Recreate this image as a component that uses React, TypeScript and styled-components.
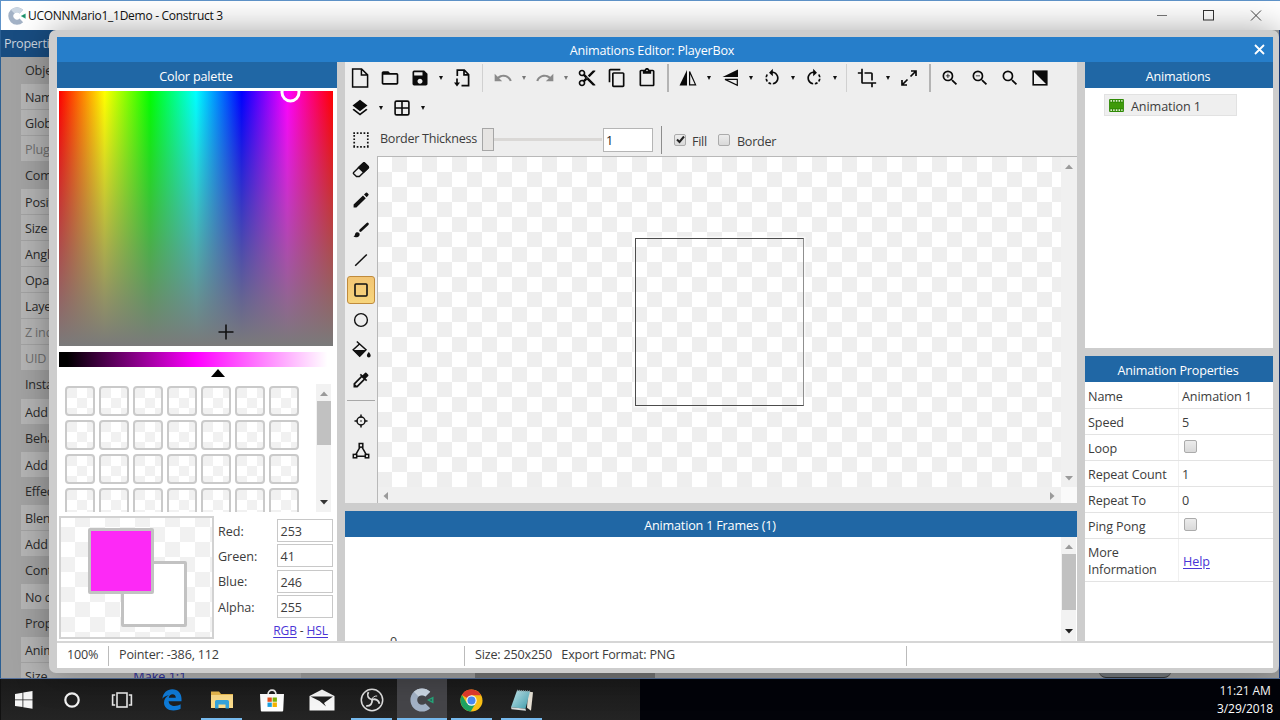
import React from "react";
import styled, { createGlobalStyle, css } from "styled-components";
import {
  MdContentCopy,
  MdContentCut,
  MdContentPaste,
  MdColorize,
  MdCrop,
  MdFolderOpen,
  MdLayers,
  MdRedo,
  MdRotateLeft,
  MdRotateRight,
  MdSave,
  MdSearch,
  MdUndo,
  MdZoomIn,
  MdZoomOut,
} from "react-icons/md";

const GlobalStyle = createGlobalStyle`
  * { box-sizing: border-box; }
  html, body { margin: 0; padding: 0; overflow: hidden; }
  body { font-family: "Open Sans", "Noto Sans", sans-serif; font-size: 12.6px; letter-spacing: -0.18px; color: #3c3c3c; }
  svg { display: block; flex: none; }
`;

const checker = (size: number, x: number, y: number, tone = "#eeeeee") => css`
  background-color: #fff;
  background-image: conic-gradient(${tone} 25%, #fff 0 50%, ${tone} 0 75%, #fff 0);
  background-size: ${size * 2}px ${size * 2}px;
  background-position: ${x}px ${y}px;
`;

const Screen = styled.div`
  position: relative;
  width: 1280px;
  height: 720px;
  display: flex;
  flex-direction: column;
  overflow: hidden;
  background: #999;
`;

/* ---------- window frame ---------- */

const TitleBar = styled.header`
  height: 30px;
  flex: none;
  display: flex;
  align-items: center;
  background: #fff;
  border-top: 1px solid #5f93c9;
  border-left: 1px solid #5f93c9;
  padding: 0 18px 0 7px;
  color: #111;
`;

const WindowTitle = styled.span`
  flex: 1;
  margin-left: 2px;
  font-size: 12px;
  letter-spacing: -0.28px;
`;

const WindowButtons = styled.div`
  display: flex;
  align-items: center;
  gap: 35px;
`;

const Workspace = styled.div`
  flex: 1;
  min-height: 0;
  display: flex;
  overflow: hidden;
  background: #a2a2a2;
  border-left: 1px solid #2b5f93;
  border-right: 1px solid #1a3f86;
`;

const Sidebar = styled.aside`
  width: 300px;
  display: flex;
  flex-direction: column;
  flex: none;
`;

const SidebarHeader = styled.div`
  height: 27px;
  flex: none;
  background: #184c80;
  color: #c9d4df;
  padding: 0 3px;
  line-height: 27px;
  letter-spacing: -0.3px;
`;

const SidebarRow = styled.div<{ $group?: boolean; $dim?: boolean }>`
  height: ${(p) => (p.$group ? 27.2 : 26)}px;
  flex: none;
  margin-left: 20px;
  padding-left: 4px;
  line-height: 27px;
  white-space: nowrap;
  display: flex;
  color: ${(p) => (p.$dim ? "#6f6f6f" : "#2a2a2a")};
  background: ${(p) => (p.$group ? "transparent" : "#b4b4b4")};
  border-bottom: ${(p) => (p.$group ? "none" : "1px solid #a2a2a2")};
`;

const SidebarValue = styled.span`
  margin-left: 86px;
  letter-spacing: 0;
  color: #2a2a9a;
`;

const SidebarScroll = styled.div`
  align-self: flex-end;
  width: 180px;
  height: 7px;
  margin-left: 174px;
  background: #777;
`;

const PillButton = styled.div`
  align-self: flex-end;
  width: 72px;
  height: 7px;
  margin-left: 444px;
  border-radius: 0 0 14px 14px;
  border-bottom: 1.5px solid #333;
  background: #777b80;
`;

/* ---------- dialog ---------- */

const Dialog = styled.section`
  position: absolute;
  left: 49px;
  top: 30px;
  width: 1230px;
  height: 643px;
  padding: 7px 6px 5px 8px;
  display: flex;
  flex-direction: column;
  background: #cdcdcd;
  border-radius: 7px;
  box-shadow: 0 0 34px rgba(0, 0, 0, 0.35);
`;

const DialogTitle = styled.div`
  height: 25px;
  flex: none;
  display: flex;
  align-items: center;
  background: #267eca;
  color: #fff;
  padding: 0 8px 0 22px;
  span {
    flex: 1;
    text-align: center;
    letter-spacing: -0.2px;
    margin-left: -29px;
    padding-top: 1px;
  }
`;

const DialogBody = styled.div`
  flex: 1;
  min-height: 0;
  display: grid;
  grid-template-columns: 280px 732px 188px;
  column-gap: 8px;
`;

const Column = styled.div<{ $gap?: number; $fill?: boolean }>`
  display: flex;
  flex-direction: column;
  gap: ${(p) => p.$gap ?? 0}px;
  ${(p) => p.$fill && "flex: 1;"}
  min-width: 0;
  min-height: 0;
`;

const PanelHeader = styled.div`
  height: 26px;
  flex: none;
  display: flex;
  align-items: center;
  justify-content: center;
  background: #2067a5;
  color: #fff;
  font-weight: 500;
  padding: 2px 2px 0 0;
`;

const PanelBody = styled.div<{ $height?: number; $pt?: number }>`
  ${(p) => (p.$height ? `height: ${p.$height}px; flex: none;` : "flex: 1;")}
  padding-top: ${(p) => p.$pt ?? 0}px;
  min-height: 0;
  background: #fff;
  overflow: hidden;
`;

/* ---------- colour palette ---------- */

const PaletteBody = styled(PanelBody)`
  display: flex;
  flex-direction: column;
  padding: 3px 4px 0 2px;
`;

const HueField = styled.div`
  position: relative;
  height: 255px;
  flex: none;
  overflow: hidden;
  background: linear-gradient(to bottom, rgba(124, 124, 124, 0) 0%, #7a7a7a 100%),
    linear-gradient(to right, #f00, #ff0, #0f0, #0ff, #00f, #f0f, #f00);
`;

const HueOverlay = styled.svg`
  position: absolute;
  inset: 0;
`;

const ShadeBar = styled.div`
  height: 15px;
  flex: none;
  margin-top: 6px;
  background: linear-gradient(to right, #000 3%, #f0f 50%, #fff 98%);
`;

const ShadeMarker = styled.div`
  width: 0;
  height: 0;
  flex: none;
  margin: 2px 0 0 151.5px;
  border: 7.5px solid transparent;
  border-top: 0;
  border-bottom: 8px solid #000;
`;

const SwatchArea = styled.div`
  margin-top: 7px;
  height: 128px;
  flex: none;
  display: flex;
  justify-content: space-between;
  overflow: hidden;
`;

const SwatchGrid = styled.div`
  display: grid;
  grid-template-columns: repeat(7, 30px);
  grid-auto-rows: 30px;
  gap: 4px;
  padding: 2px 0 0 6px;
`;

const Swatch = styled.div`
  border: 2px solid #cacaca;
  border-radius: 4px;
  ${checker(10, 0, 10, "#f1f1f1")}
`;

const ScrollTrack = styled.div<{ $mr?: number }>`
  width: 15px;
  margin-right: ${(p) => p.$mr ?? 0}px;
  display: flex;
  flex-direction: column;
  align-items: center;
  background: #f2f2f2;
  padding: 6px 0;
`;

const ScrollThumb = styled.div<{ $height: number; $mt?: number }>`
  width: 14px;
  height: ${(p) => p.$height}px;
  margin-top: ${(p) => p.$mt ?? 3}px;
  background: #c1c1c1;
`;

const Spacer = styled.div`
  flex: 1;
`;

const ColorEditor = styled.div`
  margin-top: 4px;
  display: flex;
`;

const PreviewBox = styled.div`
  position: relative;
  width: 155px;
  height: 123px;
  flex: none;
  border: 2px solid #d2d2d2;
  ${checker(15, -1, -6, "#f1f1f1")}
`;

const PreviewChip = styled.div<{ $x: number; $y: number; $color: string }>`
  position: absolute;
  left: ${(p) => p.$x}px;
  top: ${(p) => p.$y}px;
  width: 66px;
  height: 66px;
  border: 3px solid #c2c2c2;
  border-radius: 2px;
  background: ${(p) => p.$color};
`;

const ChannelList = styled.div`
  flex: 1;
  margin: 3px 0 0 4px;
  display: flex;
  flex-direction: column;
  gap: 2.4px;
`;

const ChannelRow = styled.label`
  display: flex;
  align-items: center;
  justify-content: space-between;
  height: 23px;
  padding-top: 1px;
  letter-spacing: -0.05px;
`;

const ChannelValue = styled.span`
  width: 56px;
  height: 23px;
  margin-top: -1px;
  border: 1.5px solid #c8c8c8;
  background: #fff;
  padding-left: 2.5px;
  line-height: 23px;
`;

const Link = styled.a`
  color: #4a35d6;
  text-decoration: underline;
  text-underline-offset: 2px;
`;

const ModeLinks = styled.div`
  margin: 0 5px 0 0;
  text-align: right;
  font-size: 12px;
  line-height: 20px;
  letter-spacing: -0.1px;
`;

/* ---------- editor ---------- */

const EditorPane = styled.div`
  height: 441px;
  flex: none;
  display: flex;
  flex-direction: column;
  background: #eee;
`;

const ToolbarRow = styled.div<{ $first?: boolean }>`
  height: 30px;
  margin-top: ${(p) => (p.$first ? 1 : 0)}px;
  flex: none;
  display: flex;
  align-items: center;
`;

const ToolCell = styled.div<{ $dim?: boolean }>`
  width: 30px;
  height: 30px;
  display: flex;
  align-items: center;
  justify-content: center;
  color: ${(p) => (p.$dim ? "#8a8a8a" : "#0a0a0a")};
`;

const DropArrow = styled.div<{ $dim?: boolean }>`
  width: 12px;
  display: flex;
  justify-content: center;
  &::before {
    content: "";
    margin-right: 1px;
    border: 2.5px solid transparent;
    border-bottom: 0;
    border-top: 4.5px solid ${(p) => (p.$dim ? "#777" : "#111")};
  }
`;

const Divider = styled.div<{ $strong?: boolean }>`
  width: 11px;
  height: 28px;
  display: flex;
  justify-content: center;
  &::before {
    content: "";
    width: ${(p) => (p.$strong ? 2 : 1)}px;
    background: ${(p) => (p.$strong ? "#b4b4b4" : "#d0d0d0")};
  }
`;

const EditorBody = styled.div`
  flex: 1;
  min-height: 0;
  display: flex;
  margin-top: 2px;
`;

const ToolStrip = styled.div`
  width: 32px;
  flex: none;
  display: flex;
  flex-direction: column;
  align-items: center;
  padding-right: 1px;
`;

const StripTool = styled.div<{ $active?: boolean }>`
  width: 28px;
  height: 28px;
  margin: 1px 0;
  flex: none;
  display: flex;
  align-items: center;
  justify-content: center;
  color: #111;
  border-radius: 3px;
  border: 1.5px solid ${(p) => (p.$active ? "#c08b3c" : "transparent")};
  background: ${(p) => (p.$active ? "linear-gradient(#f2c574, #f7d57c)" : "transparent")};
`;

const StripLine = styled.div`
  width: 28px;
  height: 1px;
  flex: none;
  margin: 5px 0;
  background: #a8a8a8;
`;

const CanvasColumn = styled.div`
  flex: 1;
  display: flex;
  flex-direction: column;
`;

const OptionsRow = styled.div`
  height: 31px;
  flex: none;
  display: flex;
  align-items: center;
  padding: 0 0 2px 3px;
`;

const OptionLabel = styled.span<{ $ml?: number; $drop?: number; $width?: number }>`
  margin-left: ${(p) => p.$ml ?? 0}px;
  padding-top: ${(p) => p.$drop ?? 0}px;
  padding-bottom: ${(p) => (p.$drop ? 0 : 2)}px;
  width: ${(p) => (p.$width ? `${p.$width}px` : "auto")};
  letter-spacing: -0.28px;
  white-space: nowrap;
`;

const Slider = styled.div`
  width: 120px;
  height: 22px;
  margin-right: 1px;
  display: flex;
  align-items: center;
  &::before {
    content: "";
    width: 10px;
    height: 21px;
    border: 1.5px solid #a6a6a6;
    background: #e6e4e2;
  }
  &::after {
    content: "";
    flex: 1;
    height: 3px;
    background: #dad8d6;
  }
`;

const NumberField = styled.div`
  width: 50px;
  height: 24px;
  border: 1.5px solid #b5b5b5;
  background: #fff;
  padding-left: 2px;
  line-height: 24px;
  color: #222;
`;

const OptionRule = styled.div`
  width: 1px;
  height: 28px;
  margin: 1px 12px 0 8px;
  background: #8d8d8d;
`;

const CheckBox = styled.span<{ $size?: number }>`
  width: ${(p) => p.$size ?? 12}px;
  height: ${(p) => p.$size ?? 12}px;
  flex: none;
  display: inline-flex;
  align-items: center;
  justify-content: center;
  border: 1px solid #ababab;
  border-radius: 2px;
  background: linear-gradient(#ececec, #d9d9d9);
`;

const Viewport = styled.div`
  flex: 1;
  display: grid;
  grid-template-columns: 683px 16px;
  grid-template-rows: 330px 16px;
  border-top: 1px solid #b8b8b8;
  border-left: 1px solid #b8b8b8;
`;

const Board = styled.div`
  ${checker(15, -1, 0)}
  padding: 81px 0 0 257px;
`;

const Sprite = styled.div`
  width: 169px;
  height: 168px;
  border: 1px solid #4c4c4c;
  border-right-color: #8f8f8f;
  box-shadow: 0 0 0 1.5px rgba(255, 255, 255, 0.65);
`;

const BarEnds = styled.div<{ $vertical?: boolean }>`
  display: flex;
  flex-direction: ${(p) => (p.$vertical ? "column" : "row")};
  align-items: center;
  justify-content: space-between;
  padding: ${(p) => (p.$vertical ? "6px 0 5px" : "1px 5px 0 4px")};
  background: #f0f0f0;
`;

const Corner = styled.div`
  background: #fafafa;
`;

const FramesBody = styled(PanelBody)`
  display: flex;
`;

const FrameArea = styled.div`
  flex: 1;
  display: flex;
  align-items: flex-end;
  padding-left: 45px;
  overflow: hidden;
`;

const FrameIndex = styled.span`
  height: 4px;
  line-height: 10px;
  overflow: hidden;
`;

/* ---------- right column ---------- */

const AnimationItem = styled.div`
  width: 133px;
  height: 22px;
  margin: 6px 0 0 19px;
  padding: 2px 0 0 4px;
  display: flex;
  align-items: center;
  gap: 7px;
  letter-spacing: -0.1px;
  border: 1px solid #e2e2e2;
  background: #efefef;
  svg {
    margin-top: -2px;
  }
`;

const PropRow = styled.div<{ $tall?: boolean }>`
  height: ${(p) => (p.$tall ? 43 : 26)}px;
  display: flex;
  align-items: center;
  line-height: 17px;
  letter-spacing: -0.1px;
  border-bottom: 1px solid #e3e3e3;
  padding-left: 3px;
`;

const PropName = styled.span`
  width: 91px;
  align-self: stretch;
  display: flex;
  align-items: center;
  padding-top: 2px;
  border-right: 1px solid #f0f0f0;
`;

const PropValue = styled.span<{ $box?: boolean; $ml?: number }>`
  margin-left: ${(p) => p.$ml ?? 3}px;
  padding-top: ${(p) => (p.$box ? 0 : 2)}px;
  padding-bottom: ${(p) => (p.$box ? 1.5 : 0)}px;
  display: flex;
`;

const StatusBar = styled.footer`
  height: 27px;
  flex: none;
  display: flex;
  align-items: center;
  background: #fff;
  border-top: 2px solid #d6d6d6;
`;

const StatusCell = styled.div<{ $width?: number }>`
  ${(p) => (p.$width ? `width: ${p.$width}px;` : "flex: 1;")}
  height: 20px;
  line-height: 17px;
  padding-left: 10px;
  border-right: ${(p) => (p.$width ? "1px solid #bbb" : "none")};
  white-space: pre;
`;

/* ---------- taskbar ---------- */

const Taskbar = styled.nav`
  height: 42px;
  flex: none;
  display: flex;
  justify-content: space-between;
  background: #020309;
  border-top: 1px solid #54709c;
`;

const TaskIcons = styled.div`
  width: 640px;
  display: flex;
  background: linear-gradient(#1a1a1a, #242424);
  border-left: 1px solid #111;
`;

const TaskItem = styled.div<{ $active?: boolean; $open?: boolean; $first?: boolean }>`
  width: ${(p) => (p.$first ? 45.5 : 50)}px;
  height: 41px;
  padding-top: 1px;
  display: flex;
  flex-direction: column;
  align-items: center;
  justify-content: center;
  position: relative;
  background: ${(p) => (p.$active ? "#454549" : "transparent")};
  &::after {
    content: "";
    position: absolute;
    bottom: 0;
    height: 2px;
    width: ${(p) => (p.$active ? 50 : 41)}px;
    background: ${(p) => (p.$open ? "#76b9ed" : "transparent")};
  }
`;

const Clock = styled.div`
  margin-right: 7px;
  padding-top: 3px;
  color: #fff;
  font-size: 12px;
  line-height: 18px;
  letter-spacing: -0.1px;
  text-align: center;
`;

/* ---------- drawings ---------- */

type DrawProps = { size?: number; w?: number; children: React.ReactNode };
const Draw = ({ size = 20, w = 2, children }: DrawProps) => (
  <svg width={size} height={size} viewBox="0 0 20 20" fill="none" stroke="currentColor" strokeWidth={w}>
    {children}
  </svg>
);

const NewFileIcon = () => (
  <Draw w={1.5}>
    <path d="M2.6.9h9l6 6v12.2h-15z M11.4 1v6h6" />
  </Draw>
);
const ExportIcon = () => (
  <Draw w={1.7}>
    <path d="M5.3 8V2.2h7l4.3 4.3v11.2H9.5M12 2.4v4.5h4.4" />
    <path d="M5 10.5v5" />
    <path d="M2 14.5h6l-3 4z" fill="currentColor" stroke="none" />
  </Draw>
);
const MirrorIcon = () => (
  <Draw w={1.2}>
    <path d="M9 2v15.5H1.5z" fill="currentColor" stroke="none" />
    <path d="M11.6 3.5v13.3h6z" />
  </Draw>
);
const FlipIcon = () => (
  <Draw w={1.2}>
    <path d="M18 1.5V9H2.5z" fill="currentColor" stroke="none" />
    <path d="M17.3 11.4v6L5 11.4z" />
  </Draw>
);
const ExpandIcon = () => (
  <Draw w={1.7}>
    <path d="M11.5 8.5l5-5M12 3h5v5M8.5 11.5l-5 5M3 12v5h5" />
  </Draw>
);
const ContrastIcon = () => (
  <Draw w={1.6}>
    <rect x="3.2" y="3.2" width="13.6" height="13.6" />
    <path d="M3 3h14v14z" fill="currentColor" stroke="none" />
  </Draw>
);
const GridIcon = () => (
  <Draw w={1.6}>
    <rect x="3.1" y="3.1" width="13.8" height="13.8" rx="1.5" />
    <path d="M10 3v14M3 10h14" />
  </Draw>
);
const SelectIcon = () => (
  <Draw w={1.7}>
    <path d="M2.3 3.2h15.4M2.3 16.8h15.4M3.2 5v11M16.8 5v11" strokeDasharray="1.7 1.72" />
  </Draw>
);
const EraserIcon = () => (
  <Draw w={1.4}>
    <path d="M2.6 12.4 12.2 3.2Q13 2.5 13.8 3.2l3.3 3.2q.8.8 0 1.6L8.3 16.5H5.5L2.6 13.8q-.6-.7 0-1.4z" />
    <path d="M7.5 7.6 12.2 3.2Q13 2.5 13.8 3.2l3.3 3.2q.8.8 0 1.6L12.6 12.4z" fill="currentColor" />
  </Draw>
);
const PencilIcon = () => (
  <Draw>
    <path
      d="M2.6 17.5v-3.1L12 5.5l2.8 2.8-9.4 9.2zM13 4.6l1.9-1.8q.6-.5 1.2 0l1.3 1.3q.6.6 0 1.2l-1.7 1.9z"
      fill="currentColor"
      stroke="none"
    />
  </Draw>
);
const BrushIcon = () => (
  <Draw w={2.6}>
    <path d="M9.5 10.5l7-6.5" strokeLinecap="round" />
    <path
      d="M2.3 16.6c1.5-.3 1.4-1.6 1.9-2.9.7-1.7 3-1.9 4-.7 1 1.3.4 3.3-1.3 4-1.5.6-3.4.4-4.6-.4z"
      fill="currentColor"
      stroke="none"
    />
  </Draw>
);
const LineIcon = () => (
  <Draw w={1.5}>
    <path d="M4.2 15.8 15.8 4.5" />
  </Draw>
);
const RectIcon = () => (
  <Draw w={1.6}>
    <rect x="4" y="4" width="12" height="12" rx="1" />
  </Draw>
);
const EllipseIcon = () => (
  <Draw w={1.4}>
    <circle cx="10" cy="10" r="6.4" />
  </Draw>
);
const FillIcon = () => (
  <Draw w={1.5}>
    <path d="M5.8 1.5l9.2 8.3-6.3 6.3L2.2 9.8 8.5 4" />
    <path d="M2.2 10h12.8l-6.3 6.7z" fill="currentColor" stroke="none" />
    <path d="M17.8 12c1.2 1.7 1.9 2.5 1.9 3.5a1.9 1.9 0 0 1-3.8 0c0-1 .7-1.8 1.9-3.5z" fill="currentColor" stroke="none" />
  </Draw>
);
const OriginIcon = () => (
  <Draw w={1.5}>
    <circle cx="10" cy="10" r="4" />
    <path d="M10 3.5v3M10 13.5v3M3.5 10h3M13.5 10h3" />
    <circle cx="10" cy="10" r=".8" fill="currentColor" stroke="none" />
  </Draw>
);
const PolyIcon = () => (
  <Draw w={1.5}>
    <rect x="8.2" y="2.5" width="3.6" height="3.6" />
    <rect x="2.3" y="13.4" width="3.4" height="3.4" />
    <rect x="14.3" y="13.4" width="3.4" height="3.4" />
    <path d="M9 6.2 5 13.2M11 6.2l4 7M6 15.3h8" />
  </Draw>
);
const Caret = ({ dir, color = "#9a9a9a" }: { dir: "up" | "down" | "left" | "right"; color?: string }) => {
  const d = { up: "M0 6l4-4.5L8 6z", down: "M0 2l4 4.5L8 2z", left: "M6 0v8L1.5 4z", right: "M2 0v8l4.5-4z" }[dir];
  return (
    <svg width="8" height="8" viewBox="0 0 8 8">
      <path d={d} fill={color} />
    </svg>
  );
};
const ConstructLogo = ({ size }: { size: number }) => (
  <svg width={size} height={size} viewBox="0 0 24 24" fill="none" strokeWidth="6.8">
    <path d="M17.8 6.2A8.2 8.2 0 1 0 17.8 17.8" stroke="#a3b2c6" />
    <path d="M6.2 6.2A8.2 8.2 0 0 1 17.8 6.2" stroke="#ccd7e3" />
    <path d="M17 12l6.500-3.500v7z" fill="#26a67a" />
    <path d="M19.500 12l2.300-1.300v2.600z" fill="#2d5c54" />
  </svg>
);
const FilmIcon = () => (
  <svg width="15" height="13" viewBox="0 0 16 14">
    <rect width="16" height="14" rx="1" fill="#2f8a05" />
    <path d="M1.5 2h13M1.5 12h13" stroke="#dff0d0" strokeWidth="1.8" strokeDasharray="1.6 1.3" />
    <rect x="1" y="4" width="14" height="6" fill="#3f9a0a" />
  </svg>
);
const WindowsIcon = () => (
  <svg width="18" height="18" viewBox="0 0 18 18" fill="#f4f4f4">
    <path d="M0 3l7.5-1.2v6.7H0zM8.3 1.6 17.5 0v8.5H8.3zM0 9.300h7.500V16L0 14.900zM8.300 9.300h9.200v8.500l-9.200-1.500z" />
  </svg>
);
const CortanaIcon = () => (
  <svg width="18" height="18" viewBox="0 0 18 18">
    <circle cx="9" cy="9" r="6.7" fill="none" stroke="#f4f4f4" strokeWidth="2.2" />
  </svg>
);
const TaskViewIcon = () => (
  <svg width="22" height="18" viewBox="0 0 22 18" fill="none" stroke="#e8e8e8" strokeWidth="1.6">
    <rect x="6" y="2" width="10" height="14" />
    <path d="M4.2 4H1.6v10h2.600M17.800 4h2.600v10h-2.600" />
  </svg>
);
const EdgeIcon = () => (
  <svg width="20" height="22" viewBox="0 0 20 22">
    <path
      d="M.4 9.8C1 4 5 .3 10.3.3c5.700 0 9.200 4.200 9.200 9.400v2.500H6.600c.2 3.200 2.900 4.700 6 4.700 2.300 0 4.300-.6 6-1.600v4.500c-2 1.100-4.400 1.700-7.100 1.700C5.600 21.500 2 18 2 13.500 2 10.200 3.900 7.500 7 6.200 3.800 6.500 1.700 8 .4 9.800zM6.800 8.700h7c0-2.100-1.200-3.500-3.200-3.500-2.100 0-3.400 1.300-3.800 3.500z"
      fill="#0f7bd8"
    />
  </svg>
);
const ExplorerIcon = () => (
  <svg width="22" height="20" viewBox="0 0 22 20">
    <path d="M0 1.500h8l2 2.500h12v14H0z" fill="#e9b94f" />
    <path d="M0 5h22v13H0z" fill="#fbdc8b" />
    <path d="M4 18.500v-7q0-1.500 1.500-1.500h11q1.500 0 1.500 1.500v7h-3.500v-4h-7v4z" fill="#35a4dc" />
  </svg>
);
const StoreIcon = () => (
  <svg width="24" height="24" viewBox="0 0 24 24">
    <path d="M8 7c0-6.500 8-6.500 8 0" fill="none" stroke="#f2f2f2" strokeWidth="1.6" />
    <path d="M0 6h24l-.8 16.500q0 1-1 1H1.800q-1 0-1-1z" fill="#fff" />
    <path d="M7.500 9.500h4.300v4.300H7.500z" fill="#e8501f" />
    <path d="M12.600 9.500h4.300v4.300h-4.300z" fill="#7db305" />
    <path d="M7.500 14.600h4.300v4.300H7.500z" fill="#1aa0e0" />
    <path d="M12.600 14.600h4.300v4.300h-4.300z" fill="#f5b400" />
  </svg>
);
const MailIcon = () => (
  <svg width="26" height="22" viewBox="0 0 26 22">
    <path d="M.5 7 13 .5 25.500 7v14.500H.5z" fill="#f7f7f7" />
    <path d="M1.500 7.500h22.500L15 14l2 3.500L10.500 12z" fill="#1f1f1f" />
  </svg>
);
const ObsIcon = () => (
  <svg width="24" height="24" viewBox="0 0 24 24" fill="none" stroke="#dedede">
    <circle cx="12" cy="12" r="10.7" strokeWidth="1.5" />
    <path
      d="M8.500 4c-2 3.500-.2 7 3.500 7.700 3.500-1.200 6.600.2 7.500 4M12 11.700c.8 3.700-1.700 6.600-5.800 6.200"
      strokeWidth="1.8"
    />
    <path d="M12 11.700c.3-2.300 2.200-4 5.200-3.700" strokeWidth="1" />
  </svg>
);
const ChromeIcon = () => (
  <svg width="23" height="23" viewBox="0 0 24 24">
    <circle cx="12" cy="12" r="11.5" fill="#fbc116" />
    <path d="M12 12 2 6.300A11.500 11.500 0 0 1 22 6.500H12z" fill="#e33b2e" />
    <path d="M2 6.300A11.500 11.500 0 0 0 11.200 23.500L16.500 14.500H7z" fill="#1ea362" />
    <circle cx="12" cy="12" r="5.4" fill="#fff" />
    <circle cx="12" cy="12" r="4.2" fill="#4a8af4" />
  </svg>
);
const NotepadIcon = () => (
  <svg width="24" height="23" viewBox="0 0 24 23">
    <defs>
      <linearGradient id="pad" x1="0" y1="0" x2="1" y2="1">
        <stop offset="0" stopColor="#c9eef3" />
        <stop offset="1" stopColor="#3b98a8" />
      </linearGradient>
    </defs>
    <path d="M18 2.500l5 .8-2 18.500-4-3z" fill="#e8e2d6" />
    <path d="M7 1.500l13 .8-4.500 17.500L1 18.300z" fill="url(#pad)" />
    <path d="M1 18.300l14.500 1.500.5 2-14.500-1.600z" fill="#d8dddd" />
    <path d="M7 1.500l13 .8" stroke="#8a9ca0" strokeWidth="1.5" strokeDasharray="1 1" />
  </svg>
);

/* ---------- data ---------- */

type Entry = { text: string; group?: boolean; dim?: boolean; value?: string };
const sidebarEntries: Entry[] = [
  { text: "Object type", group: true },
  { text: "Name" },
  { text: "Global" },
  { text: "Plugin", dim: true },
  { text: "Common", group: true },
  { text: "Position" },
  { text: "Size" },
  { text: "Angle" },
  { text: "Opacity" },
  { text: "Layer" },
  { text: "Z index", dim: true },
  { text: "UID", dim: true },
  { text: "Instance", group: true },
  { text: "Add" },
  { text: "Behaviors", group: true },
  { text: "Add" },
  { text: "Effects", group: true },
  { text: "Blend" },
  { text: "Add" },
  { text: "Container", group: true },
  { text: "No container" },
  { text: "Properties", group: true },
  { text: "Animations" },
  { text: "Size", value: "Make 1:1" },
];

const channels: [string, number][] = [
  ["Red:", 253],
  ["Green:", 41],
  ["Blue:", 246],
  ["Alpha:", 255],
];

const I = 20;

export default function App() {
  return (
    <Screen>
      <GlobalStyle />
      <TitleBar>
        <ConstructLogo size={18} />
        <WindowTitle>UCONNMario1_1Demo - Construct 3</WindowTitle>
        <WindowButtons>
          <svg width="12" height="12" viewBox="0 0 12 12" stroke="#777">
            <path d="M1 5.500h10" />
          </svg>
          <svg width="12" height="12" viewBox="0 0 12 12" stroke="#333" fill="none">
            <rect x="0.5" y="0.5" width="10" height="9.500" />
          </svg>
          <svg width="12" height="12" viewBox="0 0 12 12" stroke="#444">
            <path d="M1 .5l10 10M11 .5L1 10.500" />
          </svg>
        </WindowButtons>
      </TitleBar>

      <Workspace>
        <Sidebar>
          <SidebarHeader>Properties</SidebarHeader>
          {sidebarEntries.map((e, i) => (
            <SidebarRow key={i} $group={e.group} $dim={e.dim}>
              {e.text}
              {e.value && <SidebarValue>{e.value}</SidebarValue>}
            </SidebarRow>
          ))}
        </Sidebar>
        <SidebarScroll />
        <PillButton />
      </Workspace>

      <Taskbar>
        <TaskIcons>
          <TaskItem $first><WindowsIcon /></TaskItem>
          <TaskItem><CortanaIcon /></TaskItem>
          <TaskItem><TaskViewIcon /></TaskItem>
          <TaskItem><EdgeIcon /></TaskItem>
          <TaskItem $open><ExplorerIcon /></TaskItem>
          <TaskItem><StoreIcon /></TaskItem>
          <TaskItem><MailIcon /></TaskItem>
          <TaskItem $open><ObsIcon /></TaskItem>
          <TaskItem $open $active><ConstructLogo size={24} /></TaskItem>
          <TaskItem $open><ChromeIcon /></TaskItem>
          <TaskItem $open><NotepadIcon /></TaskItem>
        </TaskIcons>
        <Clock>
          <div>11:21 AM</div>
          <div>3/29/2018</div>
        </Clock>
      </Taskbar>

      <Dialog>
        <DialogTitle>
          <span>Animations Editor: PlayerBox</span>
          <svg width="11" height="11" viewBox="0 0 11 11" stroke="#fff" strokeWidth="1.8">
            <path d="M1 1l9 9M10 1l-9 9" />
          </svg>
        </DialogTitle>
        <DialogBody>
          <Column>
            <PanelHeader>Color palette</PanelHeader>
            <PaletteBody>
              <HueField>
                <HueOverlay width="274" height="255">
                  <circle cx="231.5" cy="1.5" r="8.5" fill="none" stroke="#fff" strokeWidth="3" />
                  <path d="M159.5 241h15M167 233.5v15" stroke="#111" strokeWidth="1.6" />
                </HueOverlay>
              </HueField>
              <ShadeBar />
              <ShadeMarker />
              <SwatchArea>
                <SwatchGrid>
                  {Array.from({ length: 28 }, (_, i) => (
                    <Swatch key={i} />
                  ))}
                </SwatchGrid>
                <ScrollTrack $mr={2}>
                  <Caret dir="up" />
                  <ScrollThumb $height={44} />
                  <Spacer />
                  <Caret dir="down" color="#333" />
                </ScrollTrack>
              </SwatchArea>
              <ColorEditor>
                <PreviewBox>
                  <PreviewChip $x={60} $y={43} $color="#fff" />
                  <PreviewChip $x={27} $y={10} $color="#fd29f6" />
                </PreviewBox>
                <ChannelList>
                  {channels.map(([name, value]) => (
                    <ChannelRow key={name}>
                      {name}
                      <ChannelValue>{value}</ChannelValue>
                    </ChannelRow>
                  ))}
                  <ModeLinks>
                    <Link>RGB</Link> - <Link>HSL</Link>
                  </ModeLinks>
                </ChannelList>
              </ColorEditor>
            </PaletteBody>
          </Column>

          <Column $gap={8}>
            <EditorPane>
              <ToolbarRow $first>
                <ToolCell><NewFileIcon /></ToolCell>
                <ToolCell><MdFolderOpen size={I} /></ToolCell>
                <ToolCell><MdSave size={I} /></ToolCell>
                <DropArrow />
                <ToolCell><ExportIcon /></ToolCell>
                <Divider />
                <ToolCell $dim><MdUndo size={I} /></ToolCell>
                <DropArrow $dim />
                <ToolCell $dim><MdRedo size={I} /></ToolCell>
                <DropArrow $dim />
                <ToolCell><MdContentCut size={I} /></ToolCell>
                <ToolCell><MdContentCopy size={I} /></ToolCell>
                <ToolCell><MdContentPaste size={I} /></ToolCell>
                <Divider $strong />
                <ToolCell><MirrorIcon /></ToolCell>
                <DropArrow />
                <ToolCell><FlipIcon /></ToolCell>
                <DropArrow />
                <ToolCell><MdRotateLeft size={I} /></ToolCell>
                <DropArrow />
                <ToolCell><MdRotateRight size={I} /></ToolCell>
                <DropArrow />
                <Divider />
                <ToolCell><MdCrop size={I} /></ToolCell>
                <DropArrow />
                <ToolCell><ExpandIcon /></ToolCell>
                <Divider $strong />
                <ToolCell><MdZoomIn size={I} /></ToolCell>
                <ToolCell><MdZoomOut size={I} /></ToolCell>
                <ToolCell><MdSearch size={I} /></ToolCell>
                <ToolCell><ContrastIcon /></ToolCell>
              </ToolbarRow>
              <ToolbarRow>
                <ToolCell><MdLayers size={I} /></ToolCell>
                <DropArrow />
                <ToolCell><GridIcon /></ToolCell>
                <DropArrow />
              </ToolbarRow>
              <EditorBody>
                <ToolStrip>
                  <StripTool><SelectIcon /></StripTool>
                  <StripTool><EraserIcon /></StripTool>
                  <StripTool><PencilIcon /></StripTool>
                  <StripTool><BrushIcon /></StripTool>
                  <StripTool><LineIcon /></StripTool>
                  <StripTool $active><RectIcon /></StripTool>
                  <StripTool><EllipseIcon /></StripTool>
                  <StripTool><FillIcon /></StripTool>
                  <StripTool><MdColorize size={I} /></StripTool>
                  <StripLine />
                  <StripTool><OriginIcon /></StripTool>
                  <StripTool><PolyIcon /></StripTool>
                </ToolStrip>
                <CanvasColumn>
                  <OptionsRow>
                    <OptionLabel $width={102}>Border Thickness</OptionLabel>
                    <Slider />
                    <NumberField>1</NumberField>
                    <OptionRule />
                    <CheckBox>
                      <svg width="9" height="9" viewBox="0 0 9 9" fill="none" stroke="#222" strokeWidth="2">
                        <path d="M1 4.5 3.5 7 8 1.5" />
                      </svg>
                    </CheckBox>
                    <OptionLabel $ml={6} $drop={3} $width={26}>Fill</OptionLabel>
                    <CheckBox />
                    <OptionLabel $ml={7} $drop={3}>Border</OptionLabel>
                  </OptionsRow>
                  <Viewport>
                    <Board>
                      <Sprite />
                    </Board>
                    <BarEnds $vertical>
                      <Caret dir="up" />
                      <Caret dir="down" />
                    </BarEnds>
                    <BarEnds>
                      <Caret dir="left" />
                      <Caret dir="right" />
                    </BarEnds>
                    <Corner />
                  </Viewport>
                </CanvasColumn>
              </EditorBody>
            </EditorPane>
            <Column $fill>
              <PanelHeader>Animation 1 Frames (1)</PanelHeader>
              <FramesBody>
                <FrameArea>
                  <FrameIndex>0</FrameIndex>
                </FrameArea>
                <ScrollTrack $mr={1}>
                  <Caret dir="up" />
                  <ScrollThumb $height={56} $mt={3} />
                  <Spacer />
                  <Caret dir="down" color="#222" />
                </ScrollTrack>
              </FramesBody>
            </Column>
          </Column>

          <Column $gap={8}>
            <Column>
              <PanelHeader>Animations</PanelHeader>
              <PanelBody $height={260}>
                <AnimationItem>
                  <FilmIcon />
                  Animation 1
                </AnimationItem>
              </PanelBody>
            </Column>
            <Column $fill>
              <PanelHeader>Animation Properties</PanelHeader>
              <PanelBody $pt={1}>
                <PropRow><PropName>Name</PropName><PropValue>Animation 1</PropValue></PropRow>
                <PropRow><PropName>Speed</PropName><PropValue>5</PropValue></PropRow>
                <PropRow><PropName>Loop</PropName><PropValue $box $ml={5}><CheckBox $size={13} /></PropValue></PropRow>
                <PropRow><PropName>Repeat Count</PropName><PropValue>1</PropValue></PropRow>
                <PropRow><PropName>Repeat To</PropName><PropValue>0</PropValue></PropRow>
                <PropRow><PropName>Ping Pong</PropName><PropValue $box $ml={5}><CheckBox $size={13} /></PropValue></PropRow>
                <PropRow $tall>
                  <PropName>More<br />Information</PropName>
                  <PropValue $ml={4}><Link>Help</Link></PropValue>
                </PropRow>
              </PanelBody>
            </Column>
          </Column>
        </DialogBody>
        <StatusBar>
          <StatusCell $width={52}>100%</StatusCell>
          <StatusCell $width={356}>Pointer: -386, 112</StatusCell>
          <StatusCell $width={442}>{"Size: 250x250   Export Format: PNG"}</StatusCell>
          <StatusCell />
        </StatusBar>
      </Dialog>
    </Screen>
  );
}
